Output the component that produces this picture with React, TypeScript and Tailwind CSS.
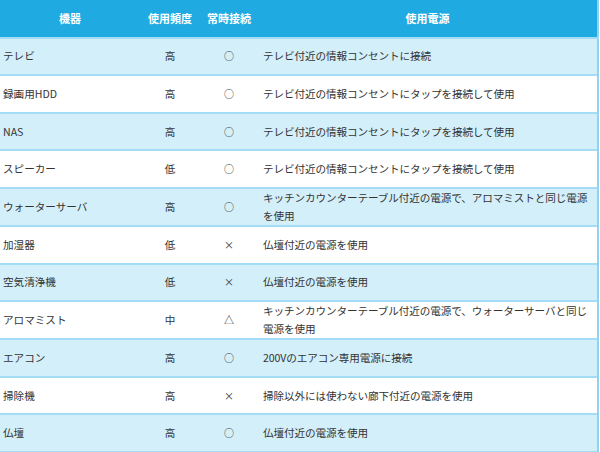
import React from "react";

const rows: [string, string, string, string][] = [
  ["テレビ", "高", "○", "テレビ付近の情報コンセントに接続"],
  ["録画用HDD", "高", "○", "テレビ付近の情報コンセントにタップを接続して使用"],
  ["NAS", "高", "○", "テレビ付近の情報コンセントにタップを接続して使用"],
  ["スピーカー", "低", "○", "テレビ付近の情報コンセントにタップを接続して使用"],
  ["ウォーターサーバ", "高", "○", "キッチンカウンターテーブル付近の電源で、アロマミストと同じ電源を使用"],
  ["加湿器", "低", "×", "仏壇付近の電源を使用"],
  ["空気清浄機", "低", "×", "仏壇付近の電源を使用"],
  ["アロマミスト", "中", "△", "キッチンカウンターテーブル付近の電源で、ウォーターサーバと同じ電源を使用"],
  ["エアコン", "高", "○", "200Vのエアコン専用電源に接続"],
  ["掃除機", "高", "×", "掃除以外には使わない廊下付近の電源を使用"],
  ["仏壇", "高", "○", "仏壇付近の電源を使用"],
];

export default function App() {
  return (
    <div
      className="w-[600px] h-[452px] overflow-hidden bg-white"
      style={{ fontFamily: '"Noto Sans CJK JP", "Noto Sans", sans-serif' }}
    >
      <table className="w-[599px] table-fixed border-collapse text-[10.6px] leading-[18px] text-[#333]">
        <colgroup>
          <col className="w-[140px]" />
          <col className="w-[60px]" />
          <col className="w-[58px]" />
          <col />
        </colgroup>
        <thead>
          <tr className="h-[37.6px] bg-[#1fabe1] text-white text-[11px] font-bold">
            <th className="border-b-2 border-[#a3dcf4] text-center font-bold">機器</th>
            <th className="border-b-2 border-[#a3dcf4] text-center font-bold">使用頻度</th>
            <th className="border-b-2 border-[#a3dcf4] text-center font-bold">常時接続</th>
            <th className="border-b-2 border-r-2 border-[#a3dcf4] border-r-[#8fd3f1] text-center font-bold">使用電源</th>
          </tr>
        </thead>
        <tbody>
          {rows.map((r, i) => (
            <tr
              key={i}
              className={`h-[37.6px] border-b-2 border-[#a3dcf4] ${i % 2 === 0 ? "bg-[#d3effa]" : "bg-white"}`}
            >
              <td className="pl-[3px] align-middle">{r[0]}</td>
              <td className="text-center align-middle">{r[1]}</td>
              <td className="text-center align-middle text-[10px]">{r[2]}</td>
              <td className="pl-[5px] pr-[6px] align-middle tracking-[-0.1px] border-r-2 border-[#8fd3f1]">{r[3]}</td>
            </tr>
          ))}
        </tbody>
      </table>
    </div>
  );
}
